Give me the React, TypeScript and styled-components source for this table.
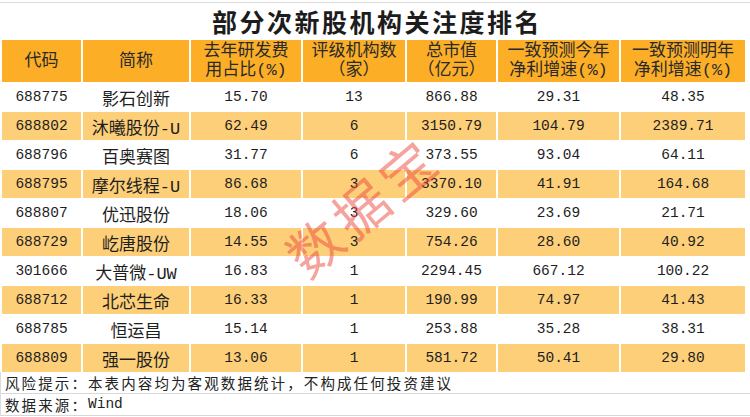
import React from 'react';
import styled, {createGlobalStyle} from 'styled-components';

const GlobalStyle = createGlobalStyle`
  html, body {
    margin: 0;
    padding: 0;
    background: #ffffff;
  }
  body {
    width: 750px;
    height: 417px;
    overflow: hidden;
  }
`;

const CJK = `"Noto Sans CJK SC", "Noto Sans", sans-serif`;
const NUM = `"Liberation Mono", "Noto Sans CJK SC", monospace`;

const rows = [
  ['688775', '影石创新', '15.70', '13', '866.88', '29.31', '48.35'],
  ['688802', '沐曦股份-U', '62.49', '6', '3150.79', '104.79', '2389.71'],
  ['688796', '百奥赛图', '31.77', '6', '373.55', '93.04', '64.11'],
  ['688795', '摩尔线程-U', '86.68', '3', '3370.10', '41.91', '164.68'],
  ['688807', '优迅股份', '18.06', '3', '329.60', '23.69', '21.71'],
  ['688729', '屹唐股份', '14.55', '3', '754.26', '28.60', '40.92'],
  ['301666', '大普微-UW', '16.83', '1', '2294.45', '667.12', '100.22'],
  ['688712', '北芯生命', '16.33', '1', '190.99', '74.97', '41.43'],
  ['688785', '恒运昌', '15.14', '1', '253.88', '35.28', '38.31'],
  ['688809', '强一股份', '13.06', '1', '581.72', '50.41', '29.80'],
];

const headers: [string, string?][] = [
  ['代码'],
  ['简称'],
  ['去年研发费', '用占比(%)'],
  ['评级机构数', '（家）'],
  ['总市值', '（亿元）'],
  ['一致预测今年', '净利增速(%)'],
  ['一致预测明年', '净利增速(%)'],
];

export default function App() {
  return (
    <Page>
      <GlobalStyle />
      <TitleBar>
        <Title>部分次新股机构关注度排名</Title>
      </TitleBar>
      <Table>
        {headers.map(([a, b]) => (
          <HeadCell key={a}>
            <span>{a}</span>
            {b && <span>{b}</span>}
          </HeadCell>
        ))}
        {rows.map((r, i) =>
          r.map((v, j) => (
            <Cell key={`${i}-${j}`} $alt={i % 2 === 1} $text={j === 1}>
              {v}
            </Cell>
          )),
        )}
      </Table>
      <Footer>
        <FootLine>风险提示：本表内容均为客观数据统计，不构成任何投资建议</FootLine>
        <FootLine>
          数据来源：<Latin>Wind</Latin>
        </FootLine>
      </Footer>
      <Watermark>数据宝</Watermark>
    </Page>
  );
}

const Page = styled.div`
  position: relative;
  width: 750px;
  height: 417px;
  overflow: hidden;
  background: #ffffff;
`;

const TitleBar = styled.div`
  height: 37px;
  margin-top: 2px;
  border-top: 1px solid #dcdcdc;
  display: flex;
  align-items: center;
  justify-content: center;
`;

const Title = styled.h1`
  margin: 0;
  font-family: ${CJK};
  font-weight: 700;
  font-size: 25px;
  letter-spacing: 2.5px;
  color: #1c1c1c;
  line-height: 1;
  padding-left: 4px;
`;

const Table = styled.div`
  display: grid;
  grid-template-columns: 79px 106px 110px 102px 89px 121px 124px;
  grid-template-rows: 42px repeat(10, 28px);
  column-gap: 2px;
  row-gap: 1px;
  margin-left: 2px;
`;

const HeadCell = styled.div`
  background: #fbae26;
  display: flex;
  flex-direction: column;
  align-items: center;
  justify-content: center;
  font-family: ${NUM};
  font-size: 17px;
  line-height: 19px;
  color: #2a2a2a;
  white-space: nowrap;
`;

const Cell = styled.div<{$alt: boolean; $text: boolean}>`
  background: ${(p) => (p.$alt ? '#fdcf78' : '#ffffff')};
  display: flex;
  align-items: center;
  justify-content: center;
  font-family: ${NUM};
  font-size: ${(p) => (p.$text ? '17px' : '14.5px')};
  color: #1e1e1e;
  white-space: nowrap;
`;

const Footer = styled.div`
  display: flex;
  flex-direction: column;
  border-left: 1px solid #dcdcdc;
`;

const FootLine = styled.div`
  height: 21px;
  padding-left: 4px;
  border-bottom: 1px solid #d8d8d8;
  display: flex;
  align-items: center;
  font-family: ${CJK};
  font-size: 14.5px;
  letter-spacing: 2.1px;
  line-height: 21px;
  color: #222222;
  white-space: nowrap;
`;

const Latin = styled.span`
  font-family: ${NUM};
  font-size: 14.5px;
  letter-spacing: 0;
`;

const Watermark = styled.div`
  position: absolute;
  left: 272px;
  top: 178px;
  transform: rotate(-40deg);
  font-family: ${CJK};
  font-size: 54px;
  font-weight: 400;
  letter-spacing: 6px;
  color: rgba(238, 70, 60, 0.5);
  line-height: 1;
  pointer-events: none;
`;
